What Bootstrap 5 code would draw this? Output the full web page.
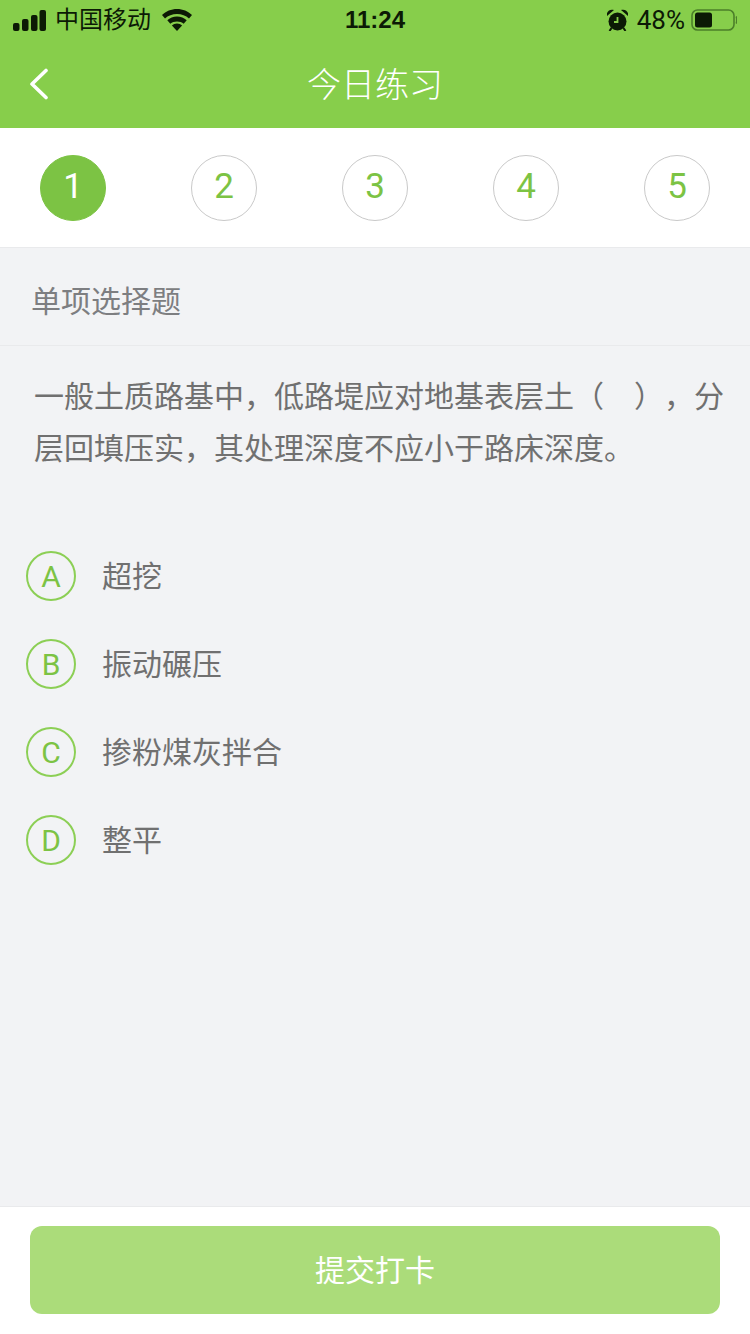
<!DOCTYPE html>
<html lang="zh-CN">

<head>
    <meta charset="UTF-8">
    <title>今日练习</title>
    <link href="https://cdn.jsdelivr.net/npm/bootstrap@5.3.0/dist/css/bootstrap.min.css" rel="stylesheet">
    <style>
        body {
            height: 100vh;
            overflow: hidden;
            background: #f2f3f5;
            font-family: "Liberation Sans", "Noto Sans CJK SC", sans-serif;
            text-spacing-trim: space-all;
        }

        /* Status bar + header */
        .top-area {
            background: #87ce4b;
        }

        .status-row {
            height: 40px;
            padding: 0 13px;
            color: #0c1a05;
        }

        .status-side {
            width: 300px;
            gap: 9px;
        }

        .carrier {
            font-size: 24px;
            line-height: 1;
            margin-right: 2px;
        }

        .clock {
            font-size: 24px;
            font-weight: 700;
        }

        .batt-text {
            font-family: Roboto, sans-serif;
            font-size: 26px;
            line-height: 1;
        }

        .batt-icon {
            margin-left: -3px;
        }

        .title-row {
            height: 88px;
        }

        .title-side {
            width: 78px;
            padding-left: 28px;
        }

        .title-text {
            padding-top: 2px;
            font-size: 34px;
            color: #fff;
            font-weight: 300;
        }

        /* Question number row */
        .step-row {
            height: 120px;
            padding: 0 40px;
            background: #fff;
            border-bottom: 1px solid #e9eaec;
        }

        .step-dot {
            width: 66px;
            height: 66px;
            font-family: Roboto, sans-serif;
            font-size: 35px;
            color: #7cc344;
            border: 1px solid #c9c9c9;
        }

        .step-on {
            background: #7cc344;
            border-color: #7cc344;
            color: #fff;
        }

        /* Question */
        .type-row {
            height: 98px;
            padding: 10px 0 0 31px;
            font-size: 30px;
            color: #7d7e81;
            border-bottom: 1px solid #e9eaec;
        }

        .stem {
            padding: 25px 26px 0 34px;
            font-size: 30px;
            line-height: 52px;
            color: #707070;
        }

        .opt-list {
            padding: 76px 0 0 26px;
            gap: 38px;
        }

        .opt-ball {
            width: 50px;
            height: 50px;
            padding-top: 1px;
            font-family: Roboto, sans-serif;
            font-size: 30px;
            color: #7cc344;
            border: 2px solid #8ccf55;
        }

        .opt-text {
            margin-left: 26px;
            font-size: 30px;
            color: #707070;
        }

        /* Bottom button */
        .foot-bar {
            height: 128px;
            padding: 19px 30px 20px;
            background: #fff;
            border-top: 1px solid #e9eaec;
        }

        .btn-submit {
            height: 88px;
            font-size: 30px;
            color: #fff;
            background: #abdc7a;
            border: none;
            border-radius: 12px;
        }
    </style>
</head>

<body class="d-flex flex-column">

    <div class="top-area">
        <div class="status-row d-flex align-items-center justify-content-between">
            <div class="status-side d-flex align-items-center">
                <svg width="33" height="21" viewBox="0 0 33 21" fill="#0c1a05">
                    <rect x="0" y="13" width="6.500" height="8" rx="2" />
                    <rect x="9" y="9" width="6.500" height="12" rx="2" />
                    <rect x="18" y="5" width="6.500" height="16" rx="2" />
                    <rect x="26.500" y="0" width="6.500" height="21" rx="2" />
                </svg>
                <span class="carrier">中国移动</span>
                <svg width="30" height="22" viewBox="0 0 30 22" fill="#0c1a05">
                    <path d="M15 0C9.200 0 3.900 2.300 0 6l3 3.400C6.100 6.600 10.300 5 15 5s8.900 1.600 12 4.400L30 6C26.100 2.300 20.800 0 15 0z" />
                    <path d="M15 7.400c-3.800 0-7.200 1.500-9.700 3.900l3 3.400c1.700-1.500 4.100-2.300 6.700-2.300s5 .8 6.700 2.300l3-3.400C22.200 8.900 18.800 7.400 15 7.400z" />
                    <path d="M15 14.400c-2 0-3.800.700-5.100 2L15 22l5.100-5.600c-1.300-1.300-3.100-2-5.100-2z" />
                </svg>
            </div>
            <span class="clock">11:24</span>
            <div class="status-side d-flex align-items-center justify-content-end">
                <svg width="21" height="22" viewBox="0 0 21 22" fill="#0c1a05">
                    <circle cx="10.500" cy="12.500" r="9" />
                    <path d="M0 7C-1 3 2.500 -.5 7 1zM21 7C22 3 18.500 -.5 14 1z" />
                    <path d="M4.500 19l-2 3M16.500 19l2 3" stroke="#0c1a05" stroke-width="2" />
                    <path d="M10.500 8v5H7" stroke="#87ce4b" stroke-width="1.800" fill="none" />
                </svg>
                <span class="batt-text">48%</span>
                <svg class="batt-icon" width="46" height="22" viewBox="0 0 46 22" fill="none">
                    <rect x="1" y="1" width="42" height="20" rx="5.500" stroke="#4c7f2a" stroke-width="1.600" />
                    <rect x="4" y="3.500" width="17" height="15" rx="2.500" fill="#0c1a05" />
                    <path d="M45 7.500c1 .8 1 6.200 0 7" stroke="#4c7f2a" stroke-width="1.500" />
                </svg>
            </div>
        </div>
        <div class="title-row d-flex align-items-center">
            <div class="title-side">
                <svg class="d-block" width="22" height="32" viewBox="0 0 22 32" fill="none">
                    <path d="M18 2.500L4 16l14 13.500" stroke="#fff" stroke-width="3.600" stroke-linecap="round" stroke-linejoin="round" />
                </svg>
            </div>
            <div class="title-text flex-grow-1 text-center">今日练习</div>
            <div class="title-side"></div>
        </div>
    </div>

    <div class="step-row d-flex align-items-center justify-content-between">
        <div class="step-dot step-on rounded-circle d-flex align-items-center justify-content-center">1</div>
        <div class="step-dot rounded-circle d-flex align-items-center justify-content-center">2</div>
        <div class="step-dot rounded-circle d-flex align-items-center justify-content-center">3</div>
        <div class="step-dot rounded-circle d-flex align-items-center justify-content-center">4</div>
        <div class="step-dot rounded-circle d-flex align-items-center justify-content-center">5</div>
    </div>

    <main class="flex-grow-1">
        <div class="type-row d-flex align-items-center">单项选择题</div>
        <div class="stem">一般土质路基中，低路堤应对地基表层土（　），分层回填压实，其处理深度不应小于路床深度。</div>
        <div class="opt-list d-flex flex-column">
            <div class="d-flex align-items-center">
                <div class="opt-ball rounded-circle d-flex align-items-center justify-content-center">A</div>
                <div class="opt-text">超挖</div>
            </div>
            <div class="d-flex align-items-center">
                <div class="opt-ball rounded-circle d-flex align-items-center justify-content-center">B</div>
                <div class="opt-text">振动碾压</div>
            </div>
            <div class="d-flex align-items-center">
                <div class="opt-ball rounded-circle d-flex align-items-center justify-content-center">C</div>
                <div class="opt-text">掺粉煤灰拌合</div>
            </div>
            <div class="d-flex align-items-center">
                <div class="opt-ball rounded-circle d-flex align-items-center justify-content-center">D</div>
                <div class="opt-text">整平</div>
            </div>
        </div>
    </main>

    <div class="foot-bar">
        <button type="button" class="btn btn-submit w-100">提交打卡</button>
    </div>

    <script src="https://cdn.jsdelivr.net/npm/bootstrap@5.3.0/dist/js/bootstrap.bundle.min.js"></script>
</body>

</html>
